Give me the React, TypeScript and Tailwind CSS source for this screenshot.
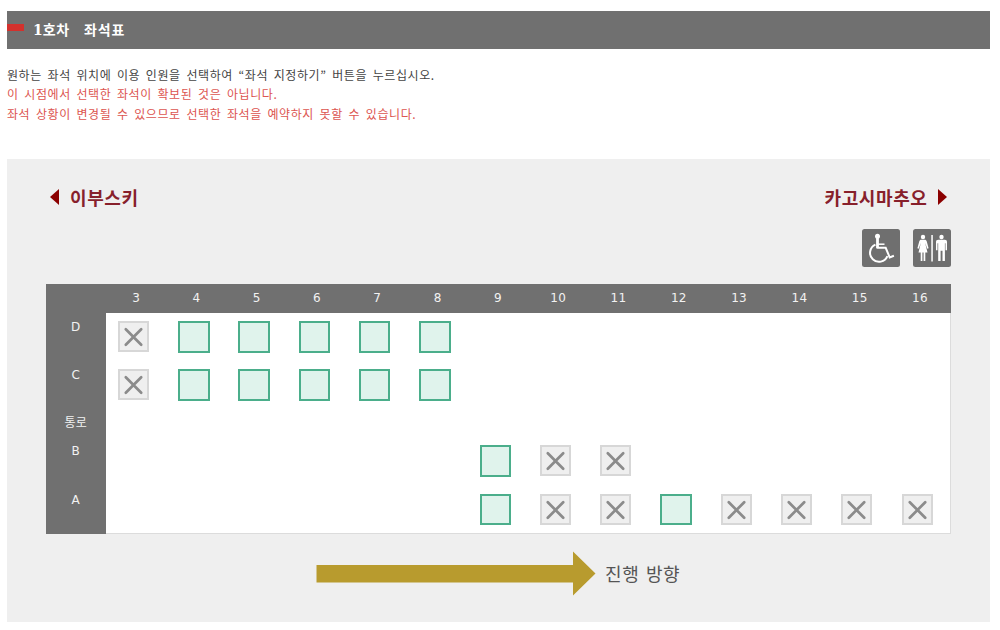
import React from 'react';

type SeatState = 'open' | 'taken' | 'none';

interface SeatRow {
  label: string;
  seats: string;
}

const COLUMNS = [3, 4, 5, 6, 7, 8, 9, 10, 11, 12, 13, 14, 15, 16];

// o = available, x = taken, . = no seat
const ROWS: SeatRow[] = [
  { label: 'D', seats: 'xooooo........' },
  { label: 'C', seats: 'xooooo........' },
  { label: '통로', seats: '' },
  { label: 'B', seats: '......oxx.....' },
  { label: 'A', seats: '......oxxoxxxx' },
];

const toState = (c: string): SeatState => (c === 'o' ? 'open' : c === 'x' ? 'taken' : 'none');

const Seat: React.FC<{ state: SeatState }> = ({ state }) => {
  if (state === 'none') return null;
  if (state === 'open') {
    return <button className="block h-[31.5px] w-[31.5px] border-2 border-[#4bae8b] bg-[#e0f3ec]" />;
  }
  return (
    <div className="h-[31px] w-[31px] border-2 border-[#d7d7d7] bg-[#efefef]">
      <svg className="block h-full w-full" viewBox="0 0 28 28" fill="none" stroke="#8b8b8b" strokeWidth={2.8} strokeLinecap="round">
        <path d="M6 6.5l16 16M22 6.5l-16 16" />
      </svg>
    </div>
  );
};

const WheelchairIcon = () => (
  <svg className="h-[38px] w-[38px]" viewBox="0 0 38 38" fill="none">
    <rect width="38" height="38" rx="2.5" fill="#6f6f6f" />
    <circle cx="15.5" cy="7.3" r="2.5" fill="#fff" />
    <path d="M15.5 9v9.8h8.2l4 9.6 4.2-1.6" stroke="#fff" strokeWidth="2" />
    <path d="M15.5 9v10" stroke="#fff" strokeWidth="2.6" />
    <path d="M15.5 15.2h7" stroke="#fff" strokeWidth="1.5" />
    <path d="M13.4 15.6a9 9 0 1 0 12 11.6" stroke="#fff" strokeWidth="2" />
  </svg>
);

const RestroomIcon = () => (
  <svg className="h-[38px] w-[38px]" viewBox="0 0 38 38" fill="#fff">
    <rect width="38" height="38" rx="2.5" fill="#6f6f6f" />
    <circle cx="10" cy="8" r="2.2" />
    <path d="M8.2 10.8h3.6c1 0 1.6.6 1.9 1.5l1.9 7-1.3.5-2.2-6 2.4 9.7h-2.2V32h-1.7v-8.5H9.4V32H7.7v-8.5H5.5l2.4-9.7-2.2 6-1.3-.5 1.9-7c.3-.9.9-1.5 1.9-1.5z" />
    <rect x="18.3" y="6" width="1.5" height="26.5" />
    <circle cx="28.5" cy="8" r="2.2" />
    <path d="M25.2 10.8h6.6c1.4 0 2.2.9 2.2 2.2v8.3h-1.5v-7h-.6V32h-2.4V21.7h-1.9V32h-2.4V14.3h-.7v7H23V13c0-1.3.8-2.2 2.2-2.2z" />
  </svg>
);

const SeatMap = () => (
  <div className="ml-[38.5px] mt-[17px] w-[905px] bg-[#707070] font-['DejaVu_Sans','Noto_Sans_CJK_KR',sans-serif] text-xs text-[#f2f2f2]">
    <div className="flex h-[29px] pl-[60.5px] leading-[28px]">
      {COLUMNS.map((n) => (
        <div key={n} className="w-[60.3px] shrink-0 text-center tracking-[0.3px]">{n}</div>
      ))}
    </div>
    {ROWS.map((row) => (
      <div key={row.label} className={`flex ${row.seats ? 'h-[48.4px]' : 'h-[27.6px]'}`}>
        <div className={`w-[60.3px] shrink-0 text-center ${row.seats ? 'leading-[28px]' : 'leading-[27px]'}`}>{row.label}</div>
        <div className={`flex flex-1 border-r border-[#dcdcdc] bg-white ${row.label === 'A' ? 'border-b' : ''}`}>
          {row.seats.split('').map((c, i) => (
            <div key={i} className="w-[60.3px] shrink-0 pl-3 pt-2">
              <Seat state={toState(c)} />
            </div>
          ))}
        </div>
      </div>
    ))}
  </div>
);

export default function App() {
  return (
    <div className="h-[630px] overflow-hidden bg-white pl-[7px] pt-[10.5px] font-['Noto_Sans_CJK_KR',sans-serif]">
      <header className="flex h-[38.5px] w-[982.5px] items-center bg-[#707070]">
        <span className="mb-1 h-[7px] w-[17px] bg-[#d3312d]" />
        <h1 className="ml-[9px] whitespace-pre text-[14px] font-bold leading-5 text-white">
          <span className="font-['DejaVu_Serif',serif] text-[14px]">1</span>
          <span className="tracking-[0.7px]">호차</span>
          <span className="ml-[14px] tracking-[0.9px]">좌석표</span>
        </h1>
      </header>

      <div className="mt-[16px] h-[94px] whitespace-nowrap text-xs leading-[19.4px] tracking-[0.58px] text-[#dc5550] [word-spacing:2.4px]">
        <p className="text-[#444]">원하는 좌석 위치에 이용 인원을 선택하여 “좌석 지정하기” 버튼을 누르십시오.</p>
        <p>이 시점에서 선택한 좌석이 확보된 것은 아닙니다.</p>
        <p>좌석 상황이 변경될 수 있으므로 선택한 좌석을 예약하지 못할 수 있습니다.</p>
      </div>

      <main className="h-[463px] w-[982.5px] bg-[#efefef] pt-[25px]">
        {/* 양쪽 종착역 */}
        <div className="flex h-[26px] items-center justify-between pl-[43px] pr-[43px] text-[18px] font-bold tracking-[0.6px] text-[#87202b]">
          <div className="flex items-center">
            <svg className="mr-[11px] h-4 w-[9px]" viewBox="0 0 9 16" fill="#8b0000"><path d="M9 0v16L0 8z" /></svg>
            이부스키
          </div>
          <div className="flex items-center">
            카고시마추오
            <svg className="ml-[10px] h-4 w-[9px]" viewBox="0 0 9 16" fill="#8b0000"><path d="M0 0v16l9-8z" /></svg>
          </div>
        </div>

        <div className="mt-[19px] flex justify-end gap-[13px] pr-[38.5px]">
          <WheelchairIcon />
          <RestroomIcon />
        </div>

        <SeatMap />

        {/* 진행 방향 */}
        <div className="ml-[309px] mt-[17px] flex items-center">
          <svg className="h-[45px] w-[280px]" viewBox="0 0 280 45" fill="#b89b2e">
            <path d="M.5 14H257V0.5L279.5 22.5 257 44.5V31.5H.5z" />
          </svg>
          <span className="ml-[9px] text-[18px] tracking-[0.6px] text-[#555] [word-spacing:2px]">진행 방향</span>
        </div>
      </main>
    </div>
  );
}
